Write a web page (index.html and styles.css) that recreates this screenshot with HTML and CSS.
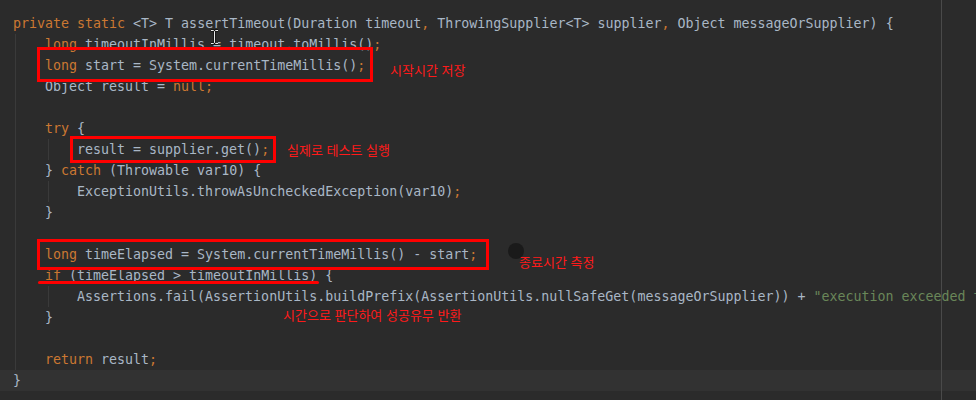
FILE: index.html
```html
<!DOCTYPE html>
<html lang="ko">
<head>
<meta charset="utf-8">
<link rel="stylesheet" href="styles.css">
</head>
<body>
<div class="editor">
  <div class="margin-line"></div>
  <div class="code">
    <div class="line"><span class="kw">private static</span> &lt;T&gt; T assertTimeout(Duration timeout<span class="kw">,</span> ThrowingSupplier&lt;T&gt; supplier<span class="kw">,</span> Object messageOrSupplier) {</div>
    <div class="body">
      <div class="line"><span class="kw">long</span> timeoutInMillis = timeout.toMillis()<span class="kw">;</span></div>
      <div class="line"><span class="kw">long</span> start = System.currentTimeMillis()<span class="kw">;</span></div>
      <div class="line">Object result = <span class="kw">null;</span></div>
      <div class="line"> </div>
      <div class="line"><span class="kw">try</span> {</div>
      <div class="inner"><div class="line">result = supplier.get()<span class="kw">;</span></div></div>
      <div class="line">} <span class="kw">catch</span> (Throwable var10) {</div>
      <div class="inner"><div class="line">ExceptionUtils.throwAsUncheckedException(var10)<span class="kw">;</span></div></div>
      <div class="line">}</div>
      <div class="line"> </div>
      <div class="line"><span class="kw">long</span> timeElapsed = System.currentTimeMillis() - start<span class="kw">;</span></div>
      <div class="line"><span class="kw">if</span> (timeElapsed &gt; timeoutInMillis) {</div>
      <div class="inner"><div class="line">Assertions.fail(AssertionUtils.buildPrefix(AssertionUtils.nullSafeGet(messageOrSupplier)) + <span class="str">"execution exceeded timeout of "</span> + timeoutInMillis + <span class="str">" ms by "</span> + (timeElapsed - timeoutInMillis) + <span class="str">" ms"</span>)<span class="kw">;</span></div></div>
      <div class="line">}</div>
      <div class="line"> </div>
      <div class="line"><span class="kw">return</span> result<span class="kw">;</span></div>
    </div>
    <div class="line current">}</div>
  </div>

  <div class="box box-start"></div>
  <div class="box box-get"></div>
  <div class="box box-elapsed"></div>
  <div class="underline"></div>
  <div class="dot"></div>

  <div class="note note-start">시작시간 저장</div>
  <div class="note note-get">실제로 테스트 실행</div>
  <div class="note note-end">종료시간 측정</div>
  <div class="note note-judge">시간으로 판단하여 성공유무 반환</div>

  <svg class="ibeam" width="9" height="16" viewBox="0 0 9 16">
    <path d="M1 1.5h2.5l1 1 1-1H8M4.5 2.5v11M1 14.5h2.5l1-1 1 1H8" fill="none" stroke="#111" stroke-width="2.4"/>
    <path d="M1 1.5h2.5l1 1 1-1H8M4.5 2.5v11M1 14.5h2.5l1-1 1 1H8" fill="none" stroke="#e8e8e8" stroke-width="1"/>
  </svg>
</div>
</body>
</html>
```

FILE: styles.css
```css
html, body {
  margin: 0;
  padding: 0;
  background: #2b2b2b;
}

.editor {
  position: relative;
  width: 976px;
  height: 400px;
  overflow: hidden;
  background: #2b2b2b;
}

.margin-line {
  position: absolute;
  left: 941px;
  top: 0;
  width: 1px;
  height: 400px;
  background: #4a4a4a;
}

.code {
  padding-top: 13px;
  font-family: "DejaVu Sans Mono", "Liberation Mono", monospace;
  font-size: 13.3px;
  color: #a9b7c6;
}

.line {
  height: 21px;
  line-height: 21px;
  white-space: pre;
  padding-left: 13px;
}

.body {
  margin-left: 15px;
  border-left: 1px solid #3a3a3a;
}

.body > .line {
  padding-left: 29px;
}

.inner {
  margin-left: 32px;
  border-left: 1px solid #3a3a3a;
}

.inner > .line {
  padding-left: 28px;
}

.line.current {
  background: #323232;
}

.kw {
  color: #cc7832;
}

.str {
  color: #6a8759;
}

.box {
  position: absolute;
  border: 3px solid #ff0000;
  box-sizing: border-box;
}

.box-start {
  left: 37px;
  top: 47px;
  width: 336px;
  height: 35px;
}

.box-get {
  left: 70px;
  top: 136px;
  width: 206px;
  height: 27px;
}

.box-elapsed {
  left: 37px;
  top: 239px;
  width: 452px;
  height: 31px;
}

.underline {
  position: absolute;
  left: 38px;
  top: 281px;
  width: 281px;
  height: 3px;
  border-radius: 2px;
  background: #ff0000;
}

.dot {
  position: absolute;
  left: 508px;
  top: 243px;
  width: 16px;
  height: 16px;
  border-radius: 50%;
  background: #1a1a1a;
}

.note {
  position: absolute;
  font-family: "Noto Sans CJK KR", sans-serif;
  font-size: 13px;
  line-height: 16px;
  color: #ff1a1a;
  white-space: nowrap;
}

.note-start {
  left: 390px;
  top: 62px;
}

.note-get {
  left: 287px;
  top: 142px;
}

.note-end {
  left: 519px;
  top: 254px;
}

.note-judge {
  left: 283px;
  top: 307px;
}

.ibeam {
  position: absolute;
  left: 210px;
  top: 29px;
}
```
